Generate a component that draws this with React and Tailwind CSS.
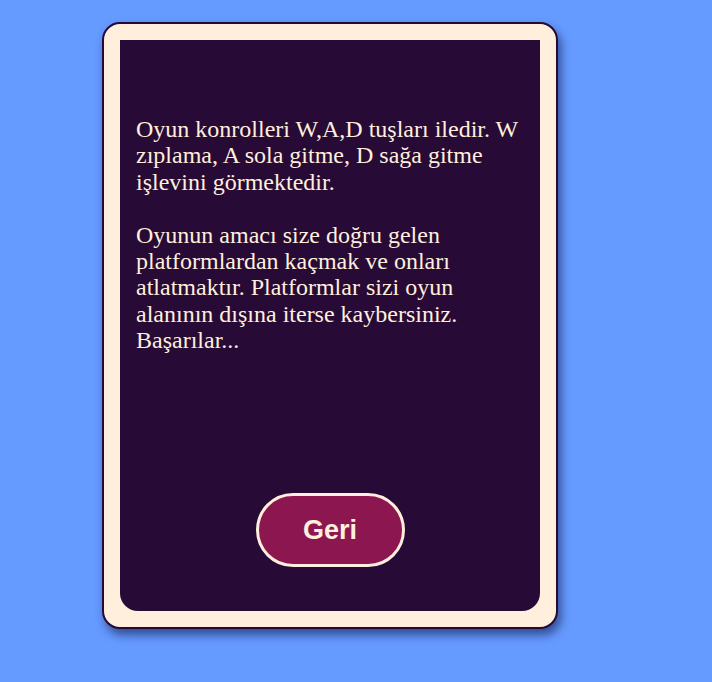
import React from 'react';

const App = () => {
    return (
        <div className="w-[712px] h-[682px] bg-[#659aff] pt-[22px] pl-[102px]">
            <div className="w-[456px] h-[607px] p-4 bg-[#ffefdc] border-2 border-[#260a33] rounded-[18px] shadow-[3px_6px_10px_rgba(0,0,40,0.5)]">
                <div className="h-full flex flex-col bg-[#270a35] rounded-b-[18px] px-4 pt-[76px] pb-[44px]">
                    <p
                        className="text-[24px] leading-[1.1] text-[#ffefdc]"
                        style={{ fontFamily: '"Liberation Serif", "Times New Roman", serif' }}
                    >
                        Oyun konrolleri W,A,D tuşları iledir. W zıplama, A sola gitme, D sağa gitme işlevini görmektedir.
                        <br />
                        <br />
                        Oyunun amacı size doğru gelen platformlardan kaçmak ve onları atlatmaktır. Platformlar sizi oyun alanının dışına iterse kaybersiniz. Başarılar...
                    </p>
                    <button
                        className="mt-auto self-center w-[149px] h-[74px] rounded-full bg-[#8c1650] border-[3px] border-[#ffefdc] text-[#ffefdc] text-[27px] font-bold"
                        style={{ fontFamily: '"Liberation Sans", Arial, sans-serif' }}
                    >
                        Geri
                    </button>
                </div>
            </div>
        </div>
    );
};

export default App;
